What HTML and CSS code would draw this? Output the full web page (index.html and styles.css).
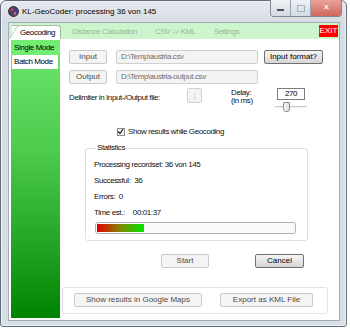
FILE: index.html
```html
<!DOCTYPE html>
<html>
<head>
    <title>KL-GeoCoder</title>
    <link rel="stylesheet" href="styles.css">
</head>
<body>
<div class="window">
    <!-- title bar -->
    <div class="titlebar">
        <svg class="app-icon" width="11" height="11" viewBox="0 0 11 11">
            <circle cx="5.5" cy="5.5" r="5" fill="#3a3f8f" stroke="#4a3020" stroke-width="1"/>
            <path d="M2 4 C3 2 5 2 6 3 C5 5 3 6 2 4 Z" fill="#d2452c"/>
            <path d="M6 6 C8 5 9 7 8 9 C6 9 5 8 6 6 Z" fill="#e0672e"/>
            <path d="M3 7 C4 7 4 9 3 9 Z" fill="#8b3fa8"/>
        </svg>
        <span class="caption">KL-GeoCoder: processing 36 von 145</span>
        <div class="win-buttons">
            <span class="wb wb-min"><i></i></span>
            <span class="wb wb-max"><i></i></span>
            <span class="wb wb-close">✕</span>
        </div>
    </div>

    <div class="client">
        <!-- tabs -->
        <div class="tabs">
            <span class="tab active">Geocoding</span>
            <span class="tab">Distance Calculation</span>
            <span class="tab">CSV -&gt; KML</span>
            <span class="tab">Settings</span>
            <span class="exit">EXIT</span>
        </div>

        <div class="page">
            <ul class="modes">
                <li class="mode current">Single Mode</li>
                <li class="mode selected">Batch Mode</li>
            </ul>

            <div class="main">
                <div class="file-row">
                    <button class="btn off io-btn">Input</button>
                    <span class="field">D:\Temp\austria.csv</span>
                    <button class="btn format-btn">Input format?</button>
                </div>
                <div class="file-row second">
                    <button class="btn off io-btn">Output</button>
                    <span class="field">D:\Temp\austria-output.csv</span>
                </div>

                <div class="delim-row">
                    <span class="delim-label">Delimiter in Input-/Output file:</span>
                    <span class="delim-box">;</span>
                    <span class="delay-label">Delay:<br>(in ms)</span>
                    <div class="delay">
                        <span class="delay-box">270</span>
                        <div class="slider"><span class="thumb"></span></div>
                    </div>
                </div>

                <label class="check-row">
                    <span class="checkbox">
                        <svg width="7" height="7" viewBox="0 0 7 7"><path d="M1 3.5 L3 5.5 L6 1" fill="none" stroke="#222" stroke-width="1.2"/></svg>
                    </span>
                    Show results while Geocoding
                </label>

                <fieldset class="stats">
                    <legend>Statistics</legend>
                    <div class="stat">Processing recordset: 36 von 145</div>
                    <div class="stat">Successful:&nbsp; 36</div>
                    <div class="stat">Errors:&nbsp; 0</div>
                    <div class="stat"><span class="time-label">Time est.:</span>00:01:37</div>
                    <div class="progress"><div class="bar" style="width: 24%"></div></div>
                </fieldset>

                <div class="run-row">
                    <button class="btn off start-btn">Start</button>
                    <button class="btn cancel-btn">Cancel</button>
                </div>

                <div class="export-box">
                    <button class="btn off maps-btn">Show results in Google Maps</button>
                    <button class="btn off kml-btn">Export as KML File</button>
                </div>
            </div>
        </div>
    </div>
</div>
</body>
</html>
```

FILE: styles.css
```css
body {
    margin: 0;
    width: 350px;
    height: 331px;
    overflow: hidden;
    background: #fff;
    font-family: "Liberation Sans", Arial, sans-serif;
    font-size: 8px;
    letter-spacing: -0.4px;
    line-height: 10px;
    color: #111;
    white-space: nowrap;
}

/* window frame */
.window {
    width: 347px;
    height: 327px;
    box-sizing: border-box;
    border: 1px solid #646e7a;
    border-radius: 6px 6px 3px 3px;
    background: linear-gradient(#e6eaef, #d6dce3 22px, #d9dfe6);
    box-shadow: inset 0 0 0 1px #eef1f4;
    display: flex;
    flex-direction: column;
    padding: 0 6px 5px 7px;
}

.titlebar {
    height: 21px;
    display: flex;
    align-items: center;
}
.app-icon {
    flex: none;
}
.caption {
    margin-left: 3px;
    font-size: 8px;
    letter-spacing: 0;
    color: #000;
    flex: 1;
}
.win-buttons {
    align-self: flex-start;
    margin-top: -1px;
    margin-right: -2px;
    display: flex;
    height: 16px;
    border: 1px solid #7f8a97;
    border-top: none;
    border-radius: 0 0 4px 4px;
    overflow: hidden;
}
.wb {
    display: flex;
    align-items: center;
    justify-content: center;
    width: 19px;
    background: linear-gradient(#eef1f4, #d5dbe2);
    border-right: 1px solid #9aa4b0;
}
.wb-min i {
    width: 7px;
    height: 2px;
    background: #4b5360;
    margin-top: 3px;
}
.wb-max i {
    width: 6px;
    height: 5px;
    border: 1px solid #a9b1bb;
}
.wb-close {
    width: 30px;
    border-right: none;
    background: linear-gradient(#e9a39c, #d0675d);
    color: #fff;
    font-size: 8px;
    letter-spacing: 0;
}

/* client area */
.client {
    flex: 1;
    display: flex;
    flex-direction: column;
    border: 1px solid #a2acb7;
    background: #fff;
}

.tabs {
    height: 16px;
    display: flex;
    align-items: flex-end;
    background: #cdf5cd;
    padding-left: 3px;
}
.tab {
    height: 14px;
    line-height: 14px;
    padding: 0 9px;
    color: #98b898;
}
.tab.active {
    position: relative;
    z-index: 1;
    padding: 0 5px 0 8px;
    margin-right: 2px;
    color: #000;
    background: #fff;
    border-top: 1px solid #a6bca6;
    border-right: 1px solid #a6bca6;
    border-radius: 0 3px 0 0;
    height: 13px;
}
.tab.active::before {
    content: "";
    position: absolute;
    z-index: -1;
    left: -3px;
    top: -1px;
    bottom: 0;
    width: 8px;
    background: #fff;
    border-left: 1px solid #a6bca6;
    border-top: 1px solid #a6bca6;
    border-radius: 3px 0 0 0;
    transform: skewX(-30deg);
    transform-origin: bottom left;
}
.exit {
    margin-left: auto;
    margin-right: 1px;
    margin-bottom: 2px;
    width: 19px;
    height: 12px;
    line-height: 12px;
    text-align: center;
    background: #ff0000;
    color: #fff;
    letter-spacing: 0;
}

.page {
    flex: 1;
    display: flex;
    padding: 1px 0 2px 2px;
}

/* left mode list */
.modes {
    list-style: none;
    margin: 0;
    padding: 0;
    width: 49px;
    background: linear-gradient(#6ee56e, #4ccb4c 40%, #1c9c1c 80%, #008300);
}
.mode {
    height: 15px;
    line-height: 15px;
    padding-left: 3px;
    color: #000;
}
.mode.current {
    background: #72ec72;
}
.mode.selected {
    background: #fff;
    margin: 0 2px 0 1px;
    padding-left: 2px;
    height: 14px;
    line-height: 14px;
}

.main {
    flex: 1;
    padding: 10px 0 0 9px;
}

/* buttons and fields */
.btn {
    box-sizing: border-box;
    height: 14px;
    padding: 0;
    font: inherit;
    line-height: 12px;
    color: #000;
    border: 1px solid #707070;
    border-radius: 2px;
    background: linear-gradient(#f3f3f3, #e6e6e6 50%, #d6d6d6);
}
.btn.off {
    color: #4a4a4a;
    border-color: #cacaca;
    background: #f4f4f4;
}
.field {
    box-sizing: border-box;
    height: 14px;
    line-height: 12px;
    padding-left: 4px;
    border: 1px solid #cfcfcf;
    border-radius: 2px;
    background: #f3f3f3;
    color: #707070;
}

.file-row {
    display: flex;
    align-items: center;
}
.file-row.second {
    margin-top: 6px;
}
.io-btn {
    width: 38px;
}
.file-row .field {
    width: 142px;
    margin-left: 9px;
}
.format-btn {
    width: 59px;
    margin-left: 6px;
}

.delim-row {
    display: flex;
    align-items: flex-start;
    margin-top: 4px;
    height: 24px;
}
.delim-label {
    width: 118px;
    margin-top: 5px;
}
.delim-box {
    box-sizing: border-box;
    width: 15px;
    height: 15px;
    line-height: 13px;
    text-align: center;
    border: 1px solid #d2d2d2;
    border-radius: 2px;
    background: #f3f3f3;
    color: #888;
}
.delay-label {
    width: 24px;
    margin-left: 29px;
    margin-top: 1px;
    line-height: 8px;
}
.delay {
    margin-left: 20px;
    width: 32px;
}
.delay-box {
    display: block;
    box-sizing: border-box;
    width: 28px;
    height: 12px;
    line-height: 10px;
    margin-left: 2px;
    text-align: center;
    border: 1px solid #7d7d7d;
    background: #fff;
    color: #000;
}
.slider {
    position: relative;
    height: 10px;
    margin-top: 2px;
    background: linear-gradient(transparent 4px, #c9c9c9 4px, #c9c9c9 5px, #eee 5px, #eee 6px, transparent 6px);
}
.slider .thumb {
    position: absolute;
    left: 8px;
    top: 0;
    width: 5px;
    height: 8px;
    border: 1px solid #8d8d8d;
    border-radius: 1px 1px 3px 3px;
    background: linear-gradient(90deg, #f6f6f6, #dedede);
}

.check-row {
    display: flex;
    align-items: center;
    margin: 15px 0 0 48px;
    height: 10px;
}
.checkbox {
    box-sizing: border-box;
    width: 8px;
    height: 8px;
    margin-right: 3px;
    border: 1px solid #8e8f8f;
    background: #f4f4f4;
    display: flex;
}
.checkbox svg {
    margin: -1px 0 0 -1px;
}

/* statistics group */
.stats {
    width: 223px;
    box-sizing: border-box;
    margin: 6px 0 0 16px;
    padding: 4px 8px 6px 8px;
    border: 1px solid #d6e0e6;
    border-radius: 3px;
}
.stats legend {
    padding: 0 1px;
    margin-left: 2px;
    line-height: 10px;
}
.stat {
    height: 16px;
    line-height: 16px;
}
.time-label {
    margin-right: 8px;
}
.progress {
    box-sizing: border-box;
    width: 201px;
    height: 12px;
    margin: 1px 0 0 1px;
    border: 1px solid #b3b3b3;
    border-radius: 3px;
    background: #fafafa;
    padding: 1px;
}
.progress .bar {
    height: 8px;
    background: linear-gradient(90deg, #e60000, #7f8a00 50%, #00e600);
}

.run-row {
    display: flex;
    margin-top: 13px;
}
.start-btn {
    width: 48px;
    margin-left: 92px;
    color: #707070;
}
.cancel-btn {
    width: 49px;
    margin-left: 46px;
}

.export-box {
    box-sizing: border-box;
    width: 266px;
    height: 27px;
    margin: 19px 0 0 -7px;
    padding: 5px 0 0 11px;
    border: 1px solid #dde5eb;
    border-radius: 3px;
    display: flex;
}
.maps-btn {
    width: 128px;
}
.kml-btn {
    width: 93px;
    margin-left: 18px;
}
```
